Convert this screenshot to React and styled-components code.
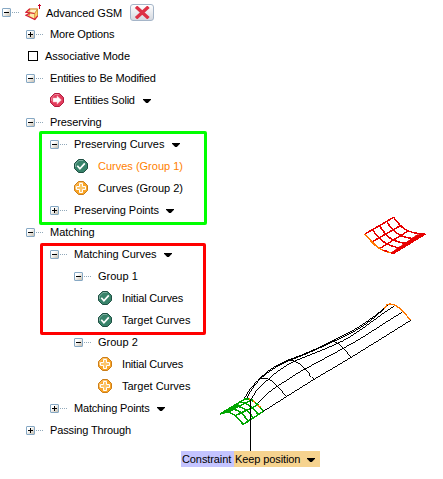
import React from "react";
import styled, { createGlobalStyle } from "styled-components";

const GlobalStyle = createGlobalStyle`
  body { margin: 0; background: #fff; }
`;

const Page = styled.main`
  display: grid;
  grid-template-columns: 443px;
  width: 443px;
  height: 479px;
  overflow: hidden;
  font: 11px/22px "Liberation Sans", Arial, sans-serif;
  color: #000;
`;

const Tree = styled.div`
  grid-area: 1 / 1;
  display: flex;
  flex-direction: column;
  padding-top: 1px;
`;

const Row = styled.div`
  display: flex;
  align-items: center;
  height: 22px;
  flex: none;
  padding-left: ${(p) => p.$indent}px;
`;

const Slot = styled.span`
  display: flex;
  align-items: center;
  width: ${(p) => p.$width || 24}px;
  flex: none;
`;

const Label = styled.span`
  white-space: nowrap;
  color: ${(p) => (p.$active ? "#ff7f00" : "#000")};
  letter-spacing: ${(p) => p.$tracking || 0}px;
`;

const RootLabel = styled(Label)`
  padding-top: 2px;
`;

const CaretIcon = styled.svg`
  flex: none;
  margin: 2px 0 0 ${(p) => p.$gap}px;
`;

const ToggleBox = styled.span`
  box-sizing: border-box;
  display: grid;
  place-items: center;
  width: 9px;
  height: 9px;
  border: 1px solid #86a8c4;
  border-radius: 1px;
  background: linear-gradient(135deg, #fff 30%, #c5beb0);
`;

const Dots = styled.span`
  width: 8px;
  height: 1px;
  margin-left: 1px;
  background: repeating-linear-gradient(90deg, #91a9ba 0 1px, transparent 1px 2px);
`;

const CheckBox = styled.span`
  box-sizing: border-box;
  width: 10px;
  height: 10px;
  margin-left: 2px;
  border: 1px solid #000;
`;

const CloseButton = styled.button`
  display: grid;
  place-items: center;
  box-sizing: border-box;
  width: 24px;
  height: 17px;
  margin: 0 0 0 8px;
  padding: 0;
  border: 1px solid #a5b5c8;
  border-radius: 3px;
  background: linear-gradient(#fff, #d5d8df);
`;

const Highlight = styled.section`
  position: relative;
  &::after {
    content: "";
    position: absolute;
    box-sizing: border-box;
    left: ${(p) => p.$left}px;
    top: ${(p) => p.$top}px;
    width: ${(p) => p.$width}px;
    height: ${(p) => p.$height}px;
    border: 3px solid ${(p) => p.$color};
    border-radius: 2px;
    pointer-events: none;
  }
`;

const Scene = styled.div`
  grid-area: 1 / 1;
  display: flex;
  flex-direction: column;
  align-items: flex-start;
  padding: 200px 0 0 181px;
`;

const Drawing = styled.svg`
  display: block;
  flex: none;
`;

const ConstraintBar = styled.div`
  display: flex;
  height: 16px;
  line-height: 16px;
`;

const ConstraintName = styled.span`
  width: 52px;
  padding-left: 1px;
  letter-spacing: -0.1px;
  background: #c4c4ff;
`;

const ConstraintValue = styled.span`
  display: flex;
  align-items: center;
  width: 85px;
  padding-left: 1px;
  letter-spacing: -0.1px;
  background: #f6d38f;
`;

function Caret({ gap = 8 }) {
  return (
    <CaretIcon $gap={gap} width="8" height="4" viewBox="0 0 8 4">
      <path d="M0 0h8v.8L4.8 4H3.2L0 .8z" />
    </CaretIcon>
  );
}

function Toggle({ open }) {
  return (
    <Slot>
      <ToggleBox>
        <svg width="7" height="7" shapeRendering="crispEdges">
          <path d={open ? "M1 3.5H6" : "M1 3.5H6M3.5 1V6"} stroke="#000" />
        </svg>
      </ToggleBox>
      <Dots />
    </Slot>
  );
}

const statusStyles = {
  done: { fill: "#38836a", edge: "#1f4f43" },
  add: { fill: "#f9a526", edge: "#cb7d1a" },
  required: { fill: "#e23c5c", edge: "#b01b3e" },
};

function Status({ kind }) {
  const { fill, edge } = statusStyles[kind];
  return (
    <Slot>
      <svg width="14" height="14" viewBox="0 0 14 14">
        <path d="M4.5.5h5l4 4v5l-4 4h-5l-4-4v-5z" fill={fill} stroke={edge} />
        <path d="M1.5 8V5L5 1.5h4" fill="none" stroke="#fff" opacity=".35" />
        {kind === "done" && (
          <path d="M3.3 6.8l2.6 3L10.8 4.4" fill="none" stroke="#fff" strokeWidth="1.7" />
        )}
        {kind === "add" && (
          <path
            d="M5.5 2.5h3v3h3v3h-3v3h-3v-3h-3v-3h3z"
            fill="#fbc56c"
            stroke="#fff"
          />
        )}
        {kind === "required" && (
          <path d="M3 5h4V2.8L11.4 7 7 11.2V9H3z" fill="#fff" stroke="#f9b4c3" strokeWidth=".5" />
        )}
      </svg>
    </Slot>
  );
}

function Item({ level, open, status, label, active, menu, gap, tracking }) {
  return (
    <Row $indent={2 + level * 24}>
      {status ? <Status kind={status} /> : <Toggle open={open} />}
      <Label $active={active} $tracking={tracking}>{label}</Label>
      {menu && <Caret gap={gap} />}
    </Row>
  );
}

function SurfaceIcon() {
  return (
    <svg width="17" height="17" viewBox="0 0 17 17">
      <path d="M1 8.5L4.5 4.5H13V12L10 16 1 11l3-1z" fill="#f0b552" />
      <path d="M4.8 5.2H12L9.5 9 3.6 7.6z" fill="#fff3c9" />
      <path d="M4.5 8.8l5 1v4.6L4.5 12z" fill="#ffe9a8" />
      <path d="M9.8 9.7L12.5 6v5.5l-2.7 3.3z" fill="#ffd067" />
      <path d="M12.5 5H4.8L4.5 11.5M9.7 9.5V15M9.7 9.5L12.5 5V12" fill="none" stroke="#c98c35" strokeWidth=".8" />
      <path d="M4.8 4.7L.8 8.3l8.7 1.2M4.4 9.5L.8 11.3l9 4.2 2.9-3.6" fill="none" stroke="#d41f38" strokeWidth="1.2" />
      <path d="M14.5 0v5M13 1.5h3" stroke="#c80024" />
    </svg>
  );
}

function Surfaces() {
  return (
    <Drawing width="262" height="251" viewBox="181 200 262 251" fill="none" shapeRendering="crispEdges">
      <g transform="translate(355 210) scale(.33333)" stroke="#e80000" strokeWidth="4.5">
        <path d="M30 72L116 22M52 95L138 46M75 115L161 62M116 130L211 72" />
        <path d="M52 59C68 80 82 106 140 115M73 47C91 72 103 97 163 101M95 34C111 60 127 84 187 87M116 22C134 47 150 71 211 72" />
        <path d="M110 127L187 74L211 72L116 130z" fill="#e80000" strokeWidth="2" />
        <path d="M30 72C52 98 70 124 116 130" stroke="#ff7800" />
        <path d="M85 121L99 125M108 128L116 130" />
      </g>
      <g transform="translate(240 290) scale(.33333)" stroke="#000" strokeWidth="3">
        <path d="M70 364L139 320L222 268L334 202L512 91" />
        <path d="M50 345C67 323 86 306 113 288C145 269 169 250 197 236L310 175C370 144 427 102 487 66" />
        <path d="M33 330C48 299 66 281 86 268C110 244 135 227 165 213C207 195 248 181 289 162C350 136 406 83 462 49" />
        <path d="M20 325C30 304 45 284 61 266C91 241 117 223 153 210C212 187 258 165 309 141C363 117 399 87 434 55L447 42" />
        <path d="M10 333C20 308 40 284 61 264C92 233 129 215 164 203C229 179 277 152 328 127C372 104 404 78 434 54" />
        <path d="M58 266C95 256 119 298 139 320M150 211C179 210 204 248 222 268M273 153C299 154 317 184 334 202" />
        <path d="M433 56L441 44C465 35 488 62 512 91" stroke="#ff7800" strokeWidth="4" />
      </g>
      <g transform="translate(210 370) scale(.33333)" stroke="#00a600" strokeWidth="4.5">
        <path d="M30 132L105 87M58 124L128 88M74 138L145 104M100 163L160 124" />
        <path d="M30 132C66 116 78 141 100 163M48 121C85 109 99 134 115 153M67 110C98 103 116 126 130 143M86 98C113 93 130 118 145 133M105 87C130 85 145 105 160 124" />
        <path d="M30 132L80 102L88 106L60 126z" fill="#00a600" strokeWidth="2" />
        <path d="M118 87L122 88M129 93L136 98M143 105L151 112" stroke="#ff7800" />
      </g>
      <path d="M250.5 399V451" stroke="#000" />
    </Drawing>
  );
}

export default function App() {
  return (
    <>
      <GlobalStyle />
      <Page>
        <Tree>
          <Row $indent={2}>
            <Slot $width={23}><Toggle open /></Slot>
            <Slot $width={21}><SurfaceIcon /></Slot>
            <RootLabel $tracking={-0.08}>Advanced GSM</RootLabel>
            <CloseButton aria-label="Close">
              <svg width="18" height="13" viewBox="0 0 18 13">
                <path d="M3 .8L15.5 12.2M15.5 .8L3 12.2" stroke="#dd3145" strokeWidth="3.4" />
              </svg>
            </CloseButton>
          </Row>
          <Item level={1} label="More Options" tracking={-0.15} />
          <Row $indent={26}>
            <Slot $width={19}><CheckBox /></Slot>
            <Label $tracking={-0.08}>Associative Mode</Label>
          </Row>
          <Item level={1} open label="Entities to Be Modified" tracking={-0.16} />
          <Item level={2} status="required" label="Entities Solid" menu tracking={-0.2} />
          <Item level={1} open label="Preserving" tracking={-0.1} />
          <Highlight $color="#00ff00" $left={39} $top={-2} $width={168} $height={94}>
            <Item level={2} open label="Preserving Curves" menu />
            <Item level={3} status="done" label="Curves (Group 1)" active />
            <Item level={3} status="add" label="Curves (Group 2)" />
            <Item level={2} label="Preserving Points" menu gap={7} tracking={-0.07} />
          </Highlight>
          <Item level={1} open label="Matching" />
          <Highlight $color="#ff0000" $left={40} $top={0} $width={166} $height={92}>
            <Item level={2} open label="Matching Curves" menu gap={7} />
            <Item level={3} open label="Group 1" />
            <Item level={4} status="done" label="Initial Curves" tracking={-0.18} />
            <Item level={4} status="done" label="Target Curves" />
          </Highlight>
          <Item level={3} open label="Group 2" />
          <Item level={4} status="add" label="Initial Curves" tracking={-0.18} />
          <Item level={4} status="add" label="Target Curves" />
          <Item level={2} label="Matching Points" menu gap={7} tracking={-0.18} />
          <Item level={1} label="Passing Through" tracking={-0.13} />
        </Tree>
        <Scene>
          <Surfaces />
          <ConstraintBar>
            <ConstraintName>Constraint</ConstraintName>
            <ConstraintValue>
              Keep position
              <Caret gap={7} />
            </ConstraintValue>
          </ConstraintBar>
        </Scene>
      </Page>
    </>
  );
}
